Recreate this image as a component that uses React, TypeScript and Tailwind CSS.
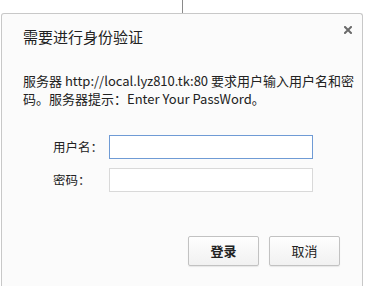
import React from 'react';

const font = "font-['Noto_Sans_CJK_SC','Noto_Sans',sans-serif]";

const Button: React.FC<{ children: React.ReactNode; strong?: boolean }> = ({ children, strong }) => (
  <button
    className={`w-[71px] h-[30px] rounded-[2px] border border-[#c2c2c2] bg-gradient-to-b from-[#fefefe] to-[#f1f1f1] text-[13px] text-[#222] shadow-[0_1px_1px_rgba(0,0,0,0.08)] ${
      strong ? 'font-semibold text-[#111]' : ''
    }`}
  >
    {children}
  </button>
);

const Field: React.FC<{ label: string; focused?: boolean; type?: string }> = ({ label, focused, type }) => (
  <div className="flex items-center">
    <label className="w-[56px] text-[12.5px] text-[#222]">{label}</label>
    <input
      type={type || 'text'}
      className={`w-[204px] h-[24px] bg-white outline-none border ${
        focused ? 'border-[#6f9bd5]' : 'border-[#d9d9d9]'
      }`}
    />
  </div>
);

export default function App() {
  return (
    <div className={`w-[367px] h-[286px] bg-white overflow-hidden flex flex-col ${font}`}>
      <div className="ml-[182px] h-[13px] w-px bg-[#8a8a8a] shrink-0" />
      <div className="relative ml-[1px] w-[362px] flex-1 border border-b-0 border-[#c8c8c8] rounded-t-[3px] bg-[#fbfbfb] pl-[21px] pr-[22px]">
        <svg className="absolute right-[10px] top-[12px]" width="8" height="8" viewBox="0 0 8 8">
          <path d="M1 1L7 7M7 1L1 7" stroke="#6a6a6a" strokeWidth="2" strokeLinecap="square" />
        </svg>
        <h1 className="mt-[12px] text-[15px] leading-[22px] text-[#222]">需要进行身份验证</h1>
        <p className="mt-[24px] text-[13px] leading-[18px] text-[#222] whitespace-nowrap">
          服务器 http://local.lyz810.tk:80 要求用户输入用户名和密
          <br />
          码。服务器提示：Enter Your PassWord。
        </p>
        <div className="mt-[27px] ml-[30px] flex flex-col gap-[9px]">
          <Field label="用户名：" focused />
          <Field label="密码：" type="password" />
        </div>
        <div className="mt-[44px] flex justify-end gap-[10px]">
          <Button strong>登录</Button>
          <Button>取消</Button>
        </div>
      </div>
    </div>
  );
}
